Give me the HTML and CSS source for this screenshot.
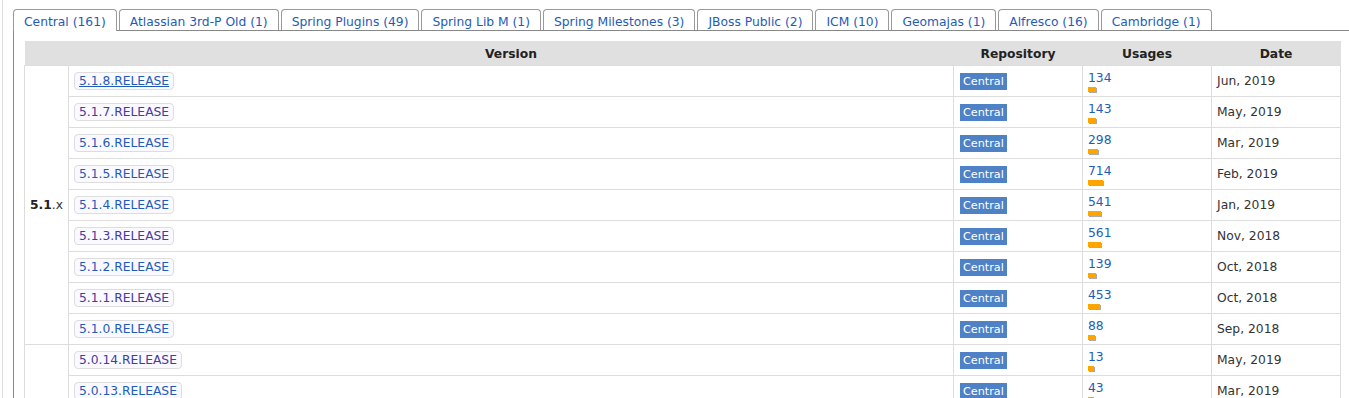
FILE: index.html
```html
<!DOCTYPE html>
<html lang="en">
<head>
    <meta charset="utf-8">
    <link rel="stylesheet" href="styles.css">
</head>
<body>
    <div class="page">
        <ul class="tabs">
            <li class="tab active"><a href="#">Central (161)</a></li>
            <li class="tab"><a href="#">Atlassian 3rd-P Old (1)</a></li>
            <li class="tab"><a href="#">Spring Plugins (49)</a></li>
            <li class="tab"><a href="#">Spring Lib M (1)</a></li>
            <li class="tab"><a href="#">Spring Milestones (3)</a></li>
            <li class="tab"><a href="#">JBoss Public (2)</a></li>
            <li class="tab"><a href="#">ICM (10)</a></li>
            <li class="tab"><a href="#">Geomajas (1)</a></li>
            <li class="tab"><a href="#">Alfresco (16)</a></li>
            <li class="tab"><a href="#">Cambridge (1)</a></li>
        </ul>
        <div class="panel">
            <table class="versions">
                <colgroup>
                    <col class="c-group">
                    <col class="c-version">
                    <col class="c-repo">
                    <col class="c-usages">
                    <col class="c-date">
                </colgroup>
                <thead>
                    <tr>
                        <th></th>
                        <th>Version</th>
                        <th>Repository</th>
                        <th>Usages</th>
                        <th>Date</th>
                    </tr>
                </thead>
                <tbody>
                    <tr>
                        <td class="group" rowspan="9"><b>5.1</b>.x</td>
                        <td class="version"><a class="vbtn hover" href="#">5.1.8.RELEASE</a></td>
                        <td class="repo"><span class="badge">Central</span></td>
                        <td class="usages"><a href="#">134</a><div class="bar" style="width:8px"></div></td>
                        <td class="date">Jun, 2019</td>
                    </tr>
                    <tr>
                        <td class="version"><a class="vbtn visited" href="#">5.1.7.RELEASE</a></td>
                        <td class="repo"><span class="badge">Central</span></td>
                        <td class="usages"><a href="#">143</a><div class="bar" style="width:8px"></div></td>
                        <td class="date">May, 2019</td>
                    </tr>
                    <tr>
                        <td class="version"><a class="vbtn" href="#">5.1.6.RELEASE</a></td>
                        <td class="repo"><span class="badge">Central</span></td>
                        <td class="usages"><a href="#">298</a><div class="bar" style="width:10px"></div></td>
                        <td class="date">Mar, 2019</td>
                    </tr>
                    <tr>
                        <td class="version"><a class="vbtn" href="#">5.1.5.RELEASE</a></td>
                        <td class="repo"><span class="badge">Central</span></td>
                        <td class="usages"><a href="#">714</a><div class="bar" style="width:15px"></div></td>
                        <td class="date">Feb, 2019</td>
                    </tr>
                    <tr>
                        <td class="version"><a class="vbtn" href="#">5.1.4.RELEASE</a></td>
                        <td class="repo"><span class="badge">Central</span></td>
                        <td class="usages"><a href="#">541</a><div class="bar" style="width:13px"></div></td>
                        <td class="date">Jan, 2019</td>
                    </tr>
                    <tr>
                        <td class="version"><a class="vbtn visited" href="#">5.1.3.RELEASE</a></td>
                        <td class="repo"><span class="badge">Central</span></td>
                        <td class="usages"><a href="#">561</a><div class="bar" style="width:13px"></div></td>
                        <td class="date">Nov, 2018</td>
                    </tr>
                    <tr>
                        <td class="version"><a class="vbtn" href="#">5.1.2.RELEASE</a></td>
                        <td class="repo"><span class="badge">Central</span></td>
                        <td class="usages"><a href="#">139</a><div class="bar" style="width:8px"></div></td>
                        <td class="date">Oct, 2018</td>
                    </tr>
                    <tr>
                        <td class="version"><a class="vbtn visited" href="#">5.1.1.RELEASE</a></td>
                        <td class="repo"><span class="badge">Central</span></td>
                        <td class="usages"><a href="#">453</a><div class="bar" style="width:12px"></div></td>
                        <td class="date">Oct, 2018</td>
                    </tr>
                    <tr>
                        <td class="version"><a class="vbtn" href="#">5.1.0.RELEASE</a></td>
                        <td class="repo"><span class="badge">Central</span></td>
                        <td class="usages"><a href="#">88</a><div class="bar" style="width:7px"></div></td>
                        <td class="date">Sep, 2018</td>
                    </tr>
                    <tr>
                        <td class="group" rowspan="7"><b>5.0</b>.x</td>
                        <td class="version"><a class="vbtn visited" href="#">5.0.14.RELEASE</a></td>
                        <td class="repo"><span class="badge">Central</span></td>
                        <td class="usages"><a href="#">13</a><div class="bar" style="width:6px"></div></td>
                        <td class="date">May, 2019</td>
                    </tr>
                    <tr>
                        <td class="version"><a class="vbtn" href="#">5.0.13.RELEASE</a></td>
                        <td class="repo"><span class="badge">Central</span></td>
                        <td class="usages"><a href="#">43</a><div class="bar" style="width:6px"></div></td>
                        <td class="date">Mar, 2019</td>
                    </tr>
                    <tr>
                        <td class="version"><a class="vbtn" href="#">5.0.12.RELEASE</a></td>
                        <td class="repo"><span class="badge">Central</span></td>
                        <td class="usages"><a href="#">96</a><div class="bar" style="width:7px"></div></td>
                        <td class="date">Feb, 2019</td>
                    </tr>
                    <tr>
                        <td class="version"><a class="vbtn" href="#">5.0.11.RELEASE</a></td>
                        <td class="repo"><span class="badge">Central</span></td>
                        <td class="usages"><a href="#">212</a><div class="bar" style="width:9px"></div></td>
                        <td class="date">Jan, 2019</td>
                    </tr>
                    <tr>
                        <td class="version"><a class="vbtn" href="#">5.0.10.RELEASE</a></td>
                        <td class="repo"><span class="badge">Central</span></td>
                        <td class="usages"><a href="#">187</a><div class="bar" style="width:9px"></div></td>
                        <td class="date">Oct, 2018</td>
                    </tr>
                    <tr>
                        <td class="version"><a class="vbtn" href="#">5.0.9.RELEASE</a></td>
                        <td class="repo"><span class="badge">Central</span></td>
                        <td class="usages"><a href="#">402</a><div class="bar" style="width:11px"></div></td>
                        <td class="date">Sep, 2018</td>
                    </tr>
                    <tr>
                        <td class="version"><a class="vbtn" href="#">5.0.8.RELEASE</a></td>
                        <td class="repo"><span class="badge">Central</span></td>
                        <td class="usages"><a href="#">311</a><div class="bar" style="width:10px"></div></td>
                        <td class="date">Jul, 2018</td>
                    </tr>
                </tbody>
            </table>
        </div>
    </div>
</body>
</html>
```

FILE: styles.css
```css
body {
    margin: 0;
    font-family: "DejaVu Sans", Verdana, sans-serif;
    font-size: 12.3px;
    color: #333;
    background-color: #fff;
}

a {
    color: #1f5cb8;
    text-decoration: none;
}

.page {
    margin-left: 2px;
    border-left: 1px solid #ddd;
    padding: 9px 0 0 10px;
}

/* tabs */
.tabs {
    list-style: none;
    margin: 0;
    padding: 0;
    display: flex;
    align-items: flex-start;
    gap: 2px;
}

.tab a {
    display: block;
    padding: 5px 10px 0;
    line-height: 15px;
    border: 1px solid #999;
    border-bottom: none;
    border-radius: 4px 4px 0 0;
    background-color: #fff;
}

.tab.active a {
    position: relative;
    margin-bottom: -1px;
    padding-bottom: 1px;
}

.panel {
    border-top: 1px solid #888;
    border-left: 1px solid #888;
    padding: 10px 9px 0 10px;
}

/* versions table */
.versions {
    width: 1316px;
    table-layout: fixed;
    border-collapse: collapse;
}

.c-group { width: 44px; }
.c-version { width: 885px; }
.c-repo, .c-usages, .c-date { width: 129px; }

.versions th {
    height: 22px;
    padding: 2px 0 0;
    background-color: #e0e0e0;
    color: #222;
    font-weight: bold;
    text-align: center;
}

.versions td {
    height: 30px;
    padding: 0 5px;
    border: 1px solid #ddd;
    vertical-align: middle;
}

.versions td.group {
    padding: 0;
    text-align: center;
    color: #333;
}

.group b {
    color: #222;
}

.vbtn {
    display: inline-block;
    padding: 1px 4px;
    line-height: 14px;
    border: 1px solid #ddd;
    border-radius: 4px;
    background-color: #f9f9ff;
}

.vbtn.hover {
    text-decoration: underline;
}

.vbtn.visited {
    color: #463c9e;
}

.versions td.repo {
    padding-left: 6px;
}

.badge {
    display: inline-block;
    padding: 0 3px;
    line-height: 17px;
    font-size: 11.2px;
    color: #fff;
    background-color: #4f81c7;
}

.usages a {
    display: block;
    line-height: 14px;
}

.bar {
    height: 5px;
    margin-top: 2px;
    background-color: #ffa500;
    box-shadow: 1px 1px 0 #aaa;
}

.date {
    color: #333;
}
```
